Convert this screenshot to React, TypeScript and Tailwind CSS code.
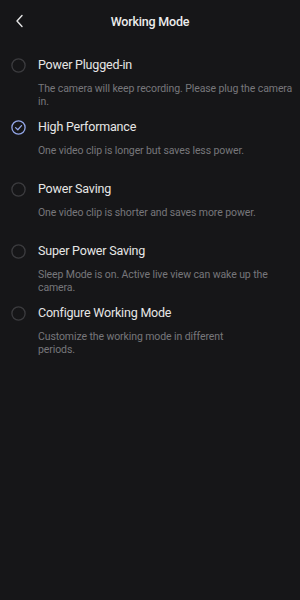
import React from "react";

const items = [
  { title: "Power Plugged-in", desc: ["The camera will keep recording. Please plug the camera", "in."], checked: false },
  { title: "High Performance", desc: ["One video clip is longer but saves less power."], checked: true },
  { title: "Power Saving", desc: ["One video clip is shorter and saves more power."], checked: false },
  { title: "Super Power Saving", desc: ["Sleep Mode is on. Active live view can wake up the", "camera."], checked: false },
  { title: "Configure Working Mode", desc: ["Customize the working mode in different", "periods."], checked: false },
];

function Radio({ checked }: { checked: boolean }) {
  if (checked) {
    return (
      <svg width="15" height="15" viewBox="0 0 15 15" className="shrink-0">
        <circle cx="7.5" cy="7.5" r="6.6" fill="none" stroke="#93a6e8" strokeWidth="1.3" />
        <path d="M4.6 7.6 L6.8 9.7 L10.5 5.6" fill="none" stroke="#93a6e8" strokeWidth="1.3" strokeLinecap="round" strokeLinejoin="round" />
      </svg>
    );
  }
  return (
    <svg width="15" height="15" viewBox="0 0 15 15" className="shrink-0">
      <circle cx="7.5" cy="7.5" r="6.6" fill="none" stroke="#3c3c3f" strokeWidth="1.3" />
    </svg>
  );
}

export default function App() {
  return (
    <div className="w-[300px] h-[600px] bg-[#161618] overflow-hidden" style={{ fontFamily: "Roboto, 'Noto Sans', sans-serif" }}>
      <div className="relative h-[43px] pt-[2px] flex items-center justify-center">
        <svg width="10" height="14" viewBox="0 0 10 14" className="absolute left-[15px] top-[14px]">
          <path d="M7 1.5 L2 7 L7 12.5" fill="none" stroke="#e6e6e6" strokeWidth="1.4" strokeLinecap="round" strokeLinejoin="round" />
        </svg>
        <span className="text-[12.5px] font-medium text-[#ececec] tracking-[-0.2px]">Working Mode</span>
      </div>
      <div className="flex flex-col">
        {items.map((it) => (
          <div key={it.title} className="h-[62px] pt-[13px] pl-[11px] pr-[2px]">
            <div className="flex items-center gap-[12px] h-[18px]">
              <Radio checked={it.checked} />
              <span className="text-[12.5px] text-[#e6e6e6] tracking-[-0.2px]">{it.title}</span>
            </div>
            <div className="pl-[27px] mt-[8px] text-[10.5px] leading-[13px] tracking-[-0.1px] text-[#77777b] whitespace-nowrap">
              {it.desc.map((l, i) => (
                <div key={i}>{l}</div>
              ))}
            </div>
          </div>
        ))}
      </div>
    </div>
  );
}
